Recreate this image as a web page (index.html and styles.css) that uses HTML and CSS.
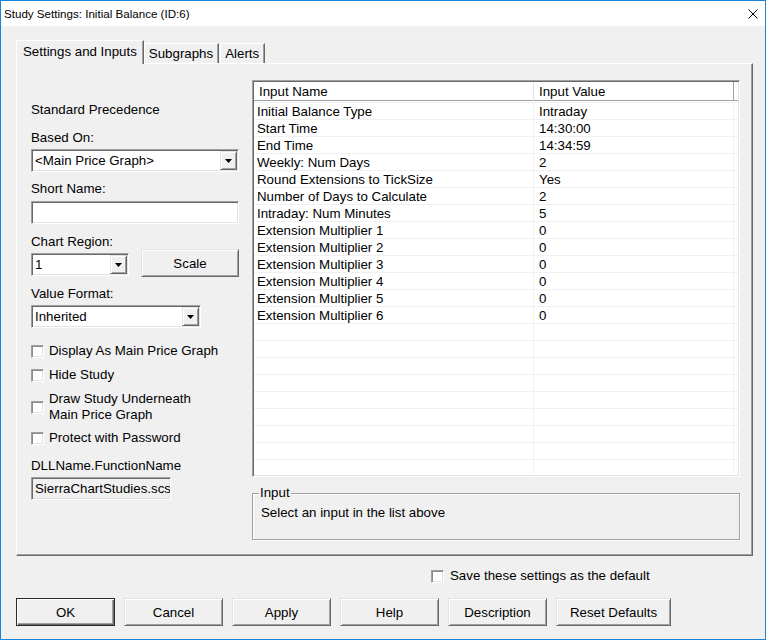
FILE: index.html
```html
<!DOCTYPE html>
<html lang="en">
  <head>
    <meta charset="UTF-8" />
    <title>Study Settings: Initial Balance (ID:6)</title>
    <link rel="stylesheet" href="styles.css">
  </head>
  <body>
    <div class="window">
      <div class="titlebar">
        <span>Study Settings: Initial Balance (ID:6)</span>
        <svg class="close" width="10" height="10" viewBox="0 0 10 10">
          <path d="M0.5 0.5L9.5 9.5M9.5 0.5L0.5 9.5" stroke="#000" stroke-width="1" fill="none" />
        </svg>
      </div>
      <div class="client">
        <div class="tabs">
          <div class="tab active">Settings and Inputs</div>
          <div class="tab">Subgraphs</div>
          <div class="tab alerts">Alerts</div>
        </div>
        <div class="panel">
          <div class="left">
            <div class="label prec">Standard Precedence</div>
            <div class="label based">Based On:</div>
            <div class="combo wide">
              <span class="combo-text">&lt;Main Price Graph&gt;</span>
              <span class="drop"><svg width="7" height="4" viewBox="0 0 7 4"><path d="M0 0h7L3.5 4z" /></svg></span>
            </div>
            <div class="label short">Short Name:</div>
            <div class="field wide"></div>
            <div class="label region">Chart Region:</div>
            <div class="region-row">
              <div class="combo small">
                <span class="combo-text">1</span>
                <span class="drop"><svg width="7" height="4" viewBox="0 0 7 4"><path d="M0 0h7L3.5 4z" /></svg></span>
              </div>
              <button class="btn scale">Scale</button>
            </div>
            <div class="label format">Value Format:</div>
            <div class="combo medium">
              <span class="combo-text">Inherited</span>
              <span class="drop"><svg width="7" height="4" viewBox="0 0 7 4"><path d="M0 0h7L3.5 4z" /></svg></span>
            </div>
            <div class="check first"><span class="box"></span><span>Display As Main Price Graph</span></div>
            <div class="check"><span class="box"></span><span>Hide Study</span></div>
            <div class="check"><span class="box"></span><span>Draw Study Underneath<br />Main Price Graph</span></div>
            <div class="check last"><span class="box"></span><span>Protect with Password</span></div>
            <div class="label dll">DLLName.FunctionName</div>
            <div class="field readonly">SierraChartStudies.scsf_InitialBalance</div>
          </div>
          <div class="right">
            <div class="list">
              <div class="list-head">
                <div class="hcell">Input Name</div>
                <div class="hcell">Input Value</div>
                <div class="hcell"></div>
              </div>
              <div class="list-body">
                <div class="row"><span>Initial Balance Type</span><span>Intraday</span><span></span></div>
                <div class="row"><span>Start Time</span><span>14:30:00</span><span></span></div>
                <div class="row"><span>End Time</span><span>14:34:59</span><span></span></div>
                <div class="row"><span>Weekly: Num Days</span><span>2</span><span></span></div>
                <div class="row"><span>Round Extensions to TickSize</span><span>Yes</span><span></span></div>
                <div class="row"><span>Number of Days to Calculate</span><span>2</span><span></span></div>
                <div class="row"><span>Intraday: Num Minutes</span><span>5</span><span></span></div>
                <div class="row"><span>Extension Multiplier 1</span><span>0</span><span></span></div>
                <div class="row"><span>Extension Multiplier 2</span><span>0</span><span></span></div>
                <div class="row"><span>Extension Multiplier 3</span><span>0</span><span></span></div>
                <div class="row"><span>Extension Multiplier 4</span><span>0</span><span></span></div>
                <div class="row"><span>Extension Multiplier 5</span><span>0</span><span></span></div>
                <div class="row"><span>Extension Multiplier 6</span><span>0</span><span></span></div>
                <div class="row"><span></span><span></span><span></span></div>
                <div class="row"><span></span><span></span><span></span></div>
                <div class="row"><span></span><span></span><span></span></div>
                <div class="row"><span></span><span></span><span></span></div>
                <div class="row"><span></span><span></span><span></span></div>
                <div class="row"><span></span><span></span><span></span></div>
                <div class="row"><span></span><span></span><span></span></div>
                <div class="row"><span></span><span></span><span></span></div>
                <div class="row"><span></span><span></span><span></span></div>
              </div>
            </div>
            <fieldset class="group">
              <legend>Input</legend>
              <p>Select an input in the list above</p>
            </fieldset>
          </div>
        </div>
        <div class="save-row">
          <div class="check"><span class="box"></span><span>Save these settings as the default</span></div>
        </div>
        <div class="buttons">
          <button class="btn default">OK</button>
          <button class="btn">Cancel</button>
          <button class="btn">Apply</button>
          <button class="btn">Help</button>
          <button class="btn">Description</button>
          <button class="btn reset">Reset Defaults</button>
        </div>
      </div>
    </div>
  </body>
</html>
```

FILE: styles.css
```css
html,
body {
  margin: 0;
  background: #fff;
}
.window {
  width: 766px;
  height: 640px;
  box-sizing: border-box;
  border: 1px solid #1883d7;
  background: #f0f0f0;
  font-family: "Liberation Sans", Arial, sans-serif;
  font-size: 13.3px;
  color: #000;
}
.titlebar {
  height: 25px;
  background: #fff;
  display: flex;
  align-items: center;
  justify-content: space-between;
  padding: 0 7px 0 3px;
  font-size: 11.6px;
}
.close {
  display: block;
}
.client {
  padding: 14px 0 0 15px;
}

/* tabs */
.tabs {
  display: flex;
  align-items: flex-end;
  height: 24px;
  margin-bottom: -1px;
}
.tab {
  height: 20px;
  line-height: 19px;
  margin-bottom: 1px;
  padding: 0 5px 0 4px;
  box-sizing: border-box;
  border-top: 1px solid #fff;
  border-left: 1px solid #fff;
  border-right: 1px solid #696969;
  box-shadow: inset -1px 0 #a0a0a0;
  background: #f0f0f0;
  white-space: nowrap;
}
.tab.active {
  height: 24px;
  line-height: 22px;
  margin-bottom: 0;
  padding: 0 6px 0 6px;
  position: relative;
  z-index: 1;
}
.tab.alerts {
  margin-left: 1px;
}

.panel {
  width: 737px;
  height: 493px;
  box-sizing: border-box;
  border: 1px solid;
  border-color: #fff #696969 #696969 #fff;
  box-shadow: inset -1px -1px #a0a0a0;
  display: grid;
  grid-template-columns: 208px 488px;
  column-gap: 13px;
  padding: 16px 0 0 14px;
  align-items: start;
}

/* left column */
.label {
  height: 16px;
  box-sizing: border-box;
  padding-top: 1px;
  line-height: 16px;
  white-space: nowrap;
}
.prec { margin-top: 21px; }
.based { margin-top: 12px; }
.short { margin-top: 8px; }
.region { margin-top: 9px; }
.format { margin-top: 8px; }
.dll { margin-top: 11px; }

.combo,
.field {
  height: 23px;
  box-sizing: border-box;
  border: 1px solid;
  border-color: #a0a0a0 #fff #fff #a0a0a0;
  box-shadow: inset 1px 1px #696969, inset -1px -1px #e3e3e3;
  background: #fff;
  margin-top: 4px;
}
.combo {
  display: flex;
  align-items: center;
}
.combo-text {
  flex: 1;
  padding-left: 3px;
  white-space: nowrap;
}
.drop {
  width: 17px;
  height: 19px;
  box-sizing: border-box;
  margin-right: 1px;
  border: 1px solid;
  border-color: #e3e3e3 #696969 #696969 #e3e3e3;
  box-shadow: inset 1px 1px #fff, inset -1px -1px #a0a0a0;
  background: #f0f0f0;
  display: flex;
  align-items: center;
  justify-content: center;
}
.drop svg {
  display: block;
}
.wide { width: 208px; }
.medium { width: 170px; }
.small { width: 98px; }
.field.wide { margin-top: 5px; }
.field.readonly {
  width: 140px;
  background: #f0f0f0;
  padding-left: 3px;
  line-height: 21px;
  white-space: nowrap;
  overflow: hidden;
}

.region-row {
  display: flex;
  justify-content: space-between;
  align-items: flex-start;
  height: 28px;
}
.region-row .combo {
  margin-top: 4px;
}

.check {
  display: flex;
  align-items: center;
  gap: 5px;
  line-height: 16px;
  margin-top: 8px;
  white-space: nowrap;
}
.check.first { margin-top: 15px; }
.check.last { margin-top: 7px; }
.box {
  width: 13px;
  height: 13px;
  flex: none;
  box-sizing: border-box;
  border: 1px solid;
  border-color: #a0a0a0 #fff #fff #a0a0a0;
  box-shadow: inset 1px 1px #8c8c8c, inset -1px -1px #e3e3e3;
  background: #fff;
}

/* buttons */
.btn {
  width: 99px;
  height: 28px;
  padding: 0;
  box-sizing: border-box;
  border: 1px solid;
  border-color: #e3e3e3 #696969 #696969 #e3e3e3;
  box-shadow: inset 1px 1px #fff, inset -1px -1px #a0a0a0;
  background: #f0f0f0;
  font: inherit;
  color: #000;
}
.btn.scale {
  width: 98px;
}
.btn.default {
  border-color: #2b2b2b;
  box-shadow: inset 1px 1px #fff, inset -1px -1px #696969, inset -2px -2px #a0a0a0;
}
.btn.reset {
  width: 115px;
}

/* input list */
.list {
  height: 397px;
  box-sizing: border-box;
  border: 1px solid;
  border-color: #a0a0a0 #fff #fff #a0a0a0;
  box-shadow: inset 1px 1px #696969, inset -1px -1px #e3e3e3;
  padding: 1px;
  background: #fff;
  overflow: hidden;
}
.list-head,
.row {
  display: grid;
  grid-template-columns: 280px 200px 1fr;
}
.list-head {
  height: 19px;
  box-sizing: border-box;
  border-bottom: 1px solid #a0a0a0;
  line-height: 18px;
}
.hcell {
  padding: 1px 0 0 5px;
  border-right: 1px solid #e5e5e5;
}
.hcell:nth-child(2) {
  border-right-color: #a0a0a0;
}
.hcell:last-child {
  border-right: none;
}
.list-body {
  margin-top: 1px;
  border-top: 1px solid #f0f0f0;
}
.row {
  height: 17px;
  box-sizing: border-box;
  border-bottom: 1px solid #f0f0f0;
  line-height: 16px;
}
.row span {
  height: 16px;
  box-sizing: border-box;
  padding: 1px 0 0 5px;
  border-right: 1px solid #f0f0f0;
  white-space: nowrap;
}
.row span:first-child {
  padding-left: 3px;
}
.row span:last-child {
  border-right: none;
}

.group {
  margin: 8px 0 0;
  padding: 0 6px 18px 6px;
  border: 1px solid #a0a0a0;
  box-shadow: 1px 1px #fff, inset 1px 1px #fff;
}
.group legend {
  padding: 0 1px;
  line-height: 16px;
}
.group p {
  margin: 4px 0 0;
  padding-left: 2px;
  line-height: 16px;
}

.save-row {
  margin-top: 12px;
  padding-left: 415px;
}
.save-row .check {
  margin-top: 0;
  gap: 6px;
}
.buttons {
  display: flex;
  gap: 9px;
  margin-top: 14px;
}
```
